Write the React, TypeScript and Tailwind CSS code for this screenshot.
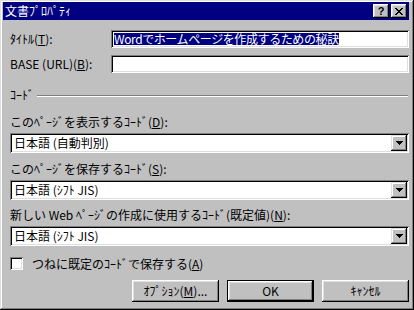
const SUNKEN =
  "shadow-[inset_1px_1px_#808080,inset_-1px_-1px_#ffffff,inset_2px_2px_#000000,inset_-2px_-2px_#dfdfdf]";

const CloseGlyph = () => (
  <svg width="8" height="7" viewBox="0 0 8 7" shapeRendering="crispEdges">
    <path
      d="M0 0h2v1H0zM6 0h2v1H6zM1 1h2v1H1zM5 1h2v1H5zM2 2h4v1H2zM3 3h2v1H3zM2 4h4v1H2zM1 5h2v1H1zM5 5h2v1H5zM0 6h2v1H0zM6 6h2v1H6z"
      fill="#000"
    />
  </svg>
);

const Arrow = () => (
  <svg width="7" height="4" viewBox="0 0 7 4" shapeRendering="crispEdges">
    <path d="M0 0h7v1H0zM1 1h5v1H1zM2 2h3v1H2zM3 3h1v1H3z" fill="#000" />
  </svg>
);

const Combo = ({ value }: { value: string }) => (
  <div className={`h-[20px] bg-white flex items-center pl-[4px] pr-[2px] ${SUNKEN}`}>
    <span className="flex-1 whitespace-nowrap">{value}</span>
    <div className="w-[16px] h-[16px] bg-[#c0c0c0] flex items-center justify-center shadow-[inset_-1px_-1px_#000000,inset_1px_1px_#dfdfdf,inset_-2px_-2px_#808080,inset_2px_2px_#ffffff]">
      <Arrow />
    </div>
  </div>
);

const Button = ({ children, primary }: { children: React.ReactNode; primary?: boolean }) => (
  <div className={primary ? "w-[87px] h-[22px] border border-black" : "w-[87px] h-[22px]"}>
    <div className="w-full h-full flex items-center justify-center shadow-[inset_-1px_-1px_#000000,inset_1px_1px_#ffffff,inset_-2px_-2px_#808080,inset_2px_2px_#dfdfdf]">
      {children}
    </div>
  </div>
);

export default function App() {
  return (
    <div className="w-[414px] h-[310px] bg-[#c0c0c0] pt-[2px] pl-[3px] pr-[5px] text-[12px] leading-[12px] text-black font-['Noto_Sans_CJK_JP','Noto_Sans',sans-serif] shadow-[inset_-1px_-1px_#000000,inset_1px_1px_#dfdfdf,inset_-2px_-2px_#808080,inset_2px_2px_#ffffff] overflow-hidden">
      {/* title bar */}
      <div className="h-[18px] bg-[#000080] flex items-center pl-[2px] pr-[2px]">
        <span className="text-white whitespace-nowrap">文書ﾌﾟﾛﾊﾟﾃｨ</span>
        <div className="ml-auto flex gap-[2px]">
          <div className="w-[16px] h-[14px] bg-[#c0c0c0] flex items-center justify-center font-['Liberation_Sans',sans-serif] font-bold text-[11px] shadow-[inset_-1px_-1px_#000000,inset_1px_1px_#ffffff,inset_-2px_-2px_#808080,inset_2px_2px_#dfdfdf]">
            ?
          </div>
          <div className="w-[16px] h-[14px] bg-[#c0c0c0] flex items-center justify-center shadow-[inset_-1px_-1px_#000000,inset_1px_1px_#ffffff,inset_-2px_-2px_#808080,inset_2px_2px_#dfdfdf]">
            <CloseGlyph />
          </div>
        </div>
      </div>

      <div className="pl-[7px] pr-[0px]">
        {/* title / base */}
        <div className="mt-[10px] flex items-center h-[18px]">
          <span className="w-[101px] whitespace-nowrap">
            ﾀｲﾄﾙ(<u>T</u>):
          </span>
          <div className={`flex-1 h-[18px] bg-white flex items-center pl-[3px] ${SUNKEN}`}>
            <span className="bg-[#000080] text-white whitespace-nowrap tracking-[-0.4px]">
              Wordでホームページを作成するための秘訣
            </span>
          </div>
        </div>
        <div className="mt-[7px] flex items-center h-[18px]">
          <span className="w-[101px] whitespace-nowrap">
            BASE (URL)(<u>B</u>):
          </span>
          <div className={`flex-1 h-[18px] bg-white ${SUNKEN}`} />
        </div>

        {/* code group */}
        <div className="mt-[16px] flex items-center gap-[3px] h-[12px]">
          <span className="whitespace-nowrap">ｺｰﾄﾞ</span>
          <div className="flex-1 mr-[1px] mt-[2px] border-t border-t-[#808080] border-b border-b-white" />
        </div>

        <div className="mt-[15px] whitespace-nowrap">
          このﾍﾟｰｼﾞを表示するｺｰﾄﾞ(<u>D</u>):
        </div>
        <div className="mt-[5px]">
          <Combo value="日本語 (自動判別)" />
        </div>

        <div className="mt-[10px] whitespace-nowrap">
          このﾍﾟｰｼﾞを保存するｺｰﾄﾞ(<u>S</u>):
        </div>
        <div className="mt-[5px]">
          <Combo value="日本語 (ｼﾌﾄ JIS)" />
        </div>

        <div className="mt-[9px] whitespace-nowrap">
          新しい Web ﾍﾟｰｼﾞの作成に使用するｺｰﾄﾞ(既定値)(<u>N</u>):
        </div>
        <div className="mt-[5px]">
          <Combo value="日本語 (ｼﾌﾄ JIS)" />
        </div>

        <div className="mt-[11px] flex items-center h-[13px]">
          <div className={`w-[13px] h-[13px] bg-white ${SUNKEN}`} />
          <span className="ml-[9px] whitespace-nowrap">
            つねに既定のｺｰﾄﾞで保存する(<u>A</u>)
          </span>
        </div>

        <div className="mt-[10px] flex justify-end gap-[8px]">
          <Button>
            ｵﾌﾟｼｮﾝ(<u>M</u>)...
          </Button>
          <Button primary>OK</Button>
          <Button>ｷｬﾝｾﾙ</Button>
        </div>
      </div>
    </div>
  );
}
